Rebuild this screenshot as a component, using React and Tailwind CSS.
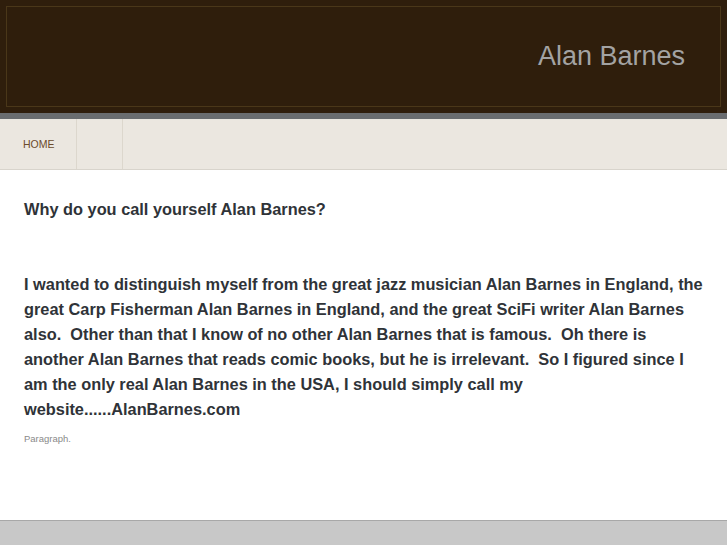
import React from 'react'

const App = () => {
  return (
    <div className="min-h-[545px] flex flex-col bg-white" style={{ fontFamily: '"Liberation Sans", Arial, sans-serif' }}>
      {/* header */}
      <div className="h-[113px] bg-[#2f1e0c] p-[6px]">
        <div className="h-full border border-[#4a3719] flex items-center justify-end pr-[35px]">
          <h1 className="text-[27px] text-[#a3a3a3] leading-none">Alan Barnes</h1>
        </div>
      </div>
      <div className="h-[6px] bg-[#6a6d70]" />

      {/* nav */}
      <div className="h-[51px] bg-[#ebe7e0] border-b border-[#d8d4cc] flex">
        <div className="w-[77px] flex items-center pl-[23px] pt-[2px] border-r border-[#dcd7cd]">
          <span className="text-[10.5px] text-[#6b4b2c]">HOME</span>
        </div>
        <div className="w-[46px] border-r border-[#dcd7cd]" />
      </div>

      {/* content */}
      <div className="flex-1 pl-[24px] pr-[21px] pt-[27px] text-[#2f3338]">
        <p className="text-[16.35px] font-bold leading-[25px]">Why do you call yourself Alan Barnes?</p>
        <p className="text-[16.35px] font-bold leading-[25px] mt-[50px] whitespace-pre-wrap">
          I wanted to distinguish myself from the great jazz musician Alan Barnes in England, the great Carp Fisherman Alan Barnes in England, and the great SciFi writer Alan Barnes also.  Other than that I know of no other Alan Barnes that is famous.  Oh there is another Alan Barnes that reads comic books, but he is irrelevant.  So I figured since I am the only real Alan Barnes in the USA, I should simply call my website......AlanBarnes.com
        </p>
        <p className="text-[9.5px] text-[#8a8a8a] mt-[10px]">Paragraph.</p>
      </div>

      {/* footer */}
      <div className="h-[25px] mt-auto bg-[#c8c8c8] border-t border-[#a8a8a8]" />
    </div>
  )
}

export default App
